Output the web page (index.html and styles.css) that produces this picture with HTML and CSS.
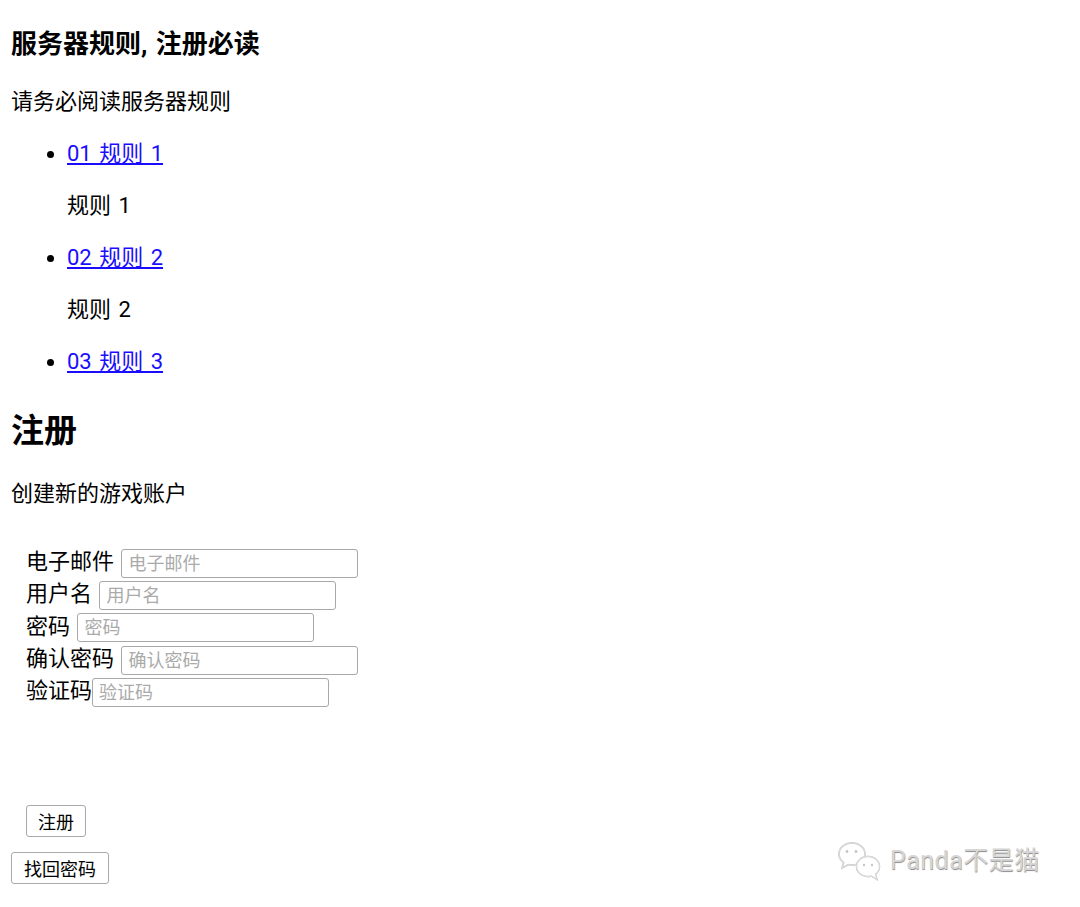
FILE: index.html
```html
<!DOCTYPE html>
<html lang="zh-CN">
<head>
    <meta charset="UTF-8">
    <meta name="viewport" content="width=device-width, initial-scale=1.0">
    <title>注册</title>
    <link rel="stylesheet" href="styles.css">
</head>
<body>
    <div class="page">
        <h3>服务器规则, 注册必读</h3>
        <p>请务必阅读服务器规则</p>
        <ul class="rules">
            <li>
                <a href="#">01 规则 1</a>
                <p>规则 1</p>
            </li>
            <li>
                <a href="#">02 规则 2</a>
                <p>规则 2</p>
            </li>
            <li>
                <a href="#">03 规则 3</a>
            </li>
        </ul>

        <h2>注册</h2>
        <p>创建新的游戏账户</p>

        <form class="register">
            <div class="row"><label for="email">电子邮件</label> <input type="email" id="email" placeholder="电子邮件"></div>
            <div class="row"><label for="username">用户名</label> <input type="text" id="username" placeholder="用户名"></div>
            <div class="row"><label for="password">密码</label> <input type="password" id="password" placeholder="密码"></div>
            <div class="row"><label for="confirm">确认密码</label> <input type="password" id="confirm" placeholder="确认密码"></div>
            <div class="row"><label for="captcha">验证码</label><input type="text" id="captcha" placeholder="验证码"></div>
            <button type="button" class="btn">注册</button>
        </form>
        <button type="button" class="btn">找回密码</button>
    </div>

    <div class="watermark">
        <svg class="wx" width="48" height="42" viewBox="0 0 48 42">
            <path d="M16 3 C8.5 3 3 8 3 14 C3 17.5 4.8 20.5 7.6 22.5 L6 28 L12.5 24.6 C13.6 24.9 14.8 25 16 25 C23.5 25 29 20 29 14 C29 8 23.5 3 16 3 Z" />
            <circle cx="11" cy="11.5" r="1.2" class="eye" />
            <circle cx="20" cy="11.5" r="1.2" class="eye" />
            <path class="front" d="M32 16.5 C25.5 16.5 20.5 21 20.5 26.5 C20.5 32 25.5 36.5 32 36.5 C33.2 36.5 34.3 36.3 35.3 36 L41 39.5 L39.4 34 C42 32.2 43.5 29.5 43.5 26.5 C43.5 21 38.5 16.5 32 16.5 Z" />
            <circle cx="28" cy="25" r="1.2" class="eye" />
            <circle cx="36" cy="25" r="1.2" class="eye" />
        </svg>
        <span>Panda不是猫</span>
    </div>
</body>
</html>
```

FILE: styles.css
```css
body {
    margin: 0;
    padding: 0;
    font-family: Roboto, "Noto Sans CJK SC", sans-serif;
    font-size: 22px;
    line-height: 30px;
    word-spacing: 2px;
    color: #000;
    background: #fff;
}

.page {
    padding: 0 11px 20px;
}

h3 {
    font-size: 26px;
    line-height: 34px;
    margin: 27px 0 26px;
}

p {
    margin: 22px 0;
}

.rules {
    margin: 22px 0;
    padding-left: 56px;
}

.rules a {
    color: #1a0dff;
}

h2 {
    font-size: 33px;
    line-height: 40px;
    margin: 34px 0 28px;
}

.register {
    margin: 0;
    padding: 15px 0 0 15px;
}

.row {
    height: 32.3px;
    line-height: 32.3px;
}

.row input {
    width: 237px;
    height: 29px;
    box-sizing: border-box;
    padding: 0 6px;
    border: 1px solid #a8a8a8;
    border-radius: 3px;
    font-family: inherit;
    font-size: 18px;
    vertical-align: middle;
}

.row input::placeholder {
    color: #aaa;
}

.btn {
    display: block;
    height: 32px;
    padding: 0 11px;
    background: #fff;
    border: 1px solid #aaa;
    border-radius: 3px;
    font-family: inherit;
    font-size: 18px;
    color: #000;
}

.register .btn {
    margin-top: 98px;
}

.page > .btn {
    margin-top: 15px;
    padding: 0 12px;
}

.watermark {
    position: absolute;
    left: 836px;
    top: 840px;
    display: flex;
    align-items: center;
    gap: 6px;
}

.wx {
    filter: drop-shadow(0.5px 0.8px 0.4px rgba(0, 0, 0, 0.3));
}

.wx path {
    fill: none;
    stroke: #dadada;
    stroke-width: 1.4;
}

.wx path.front {
    fill: #fff;
}

.wx .eye {
    fill: #c8c8c8;
}

.watermark span {
    font-size: 25px;
    line-height: 40px;
    word-spacing: 0;
    color: #d6d6d6;
    text-shadow: 0.5px 1px 0.8px rgba(0, 0, 0, 0.45);
    letter-spacing: 0.5px;
}
```
